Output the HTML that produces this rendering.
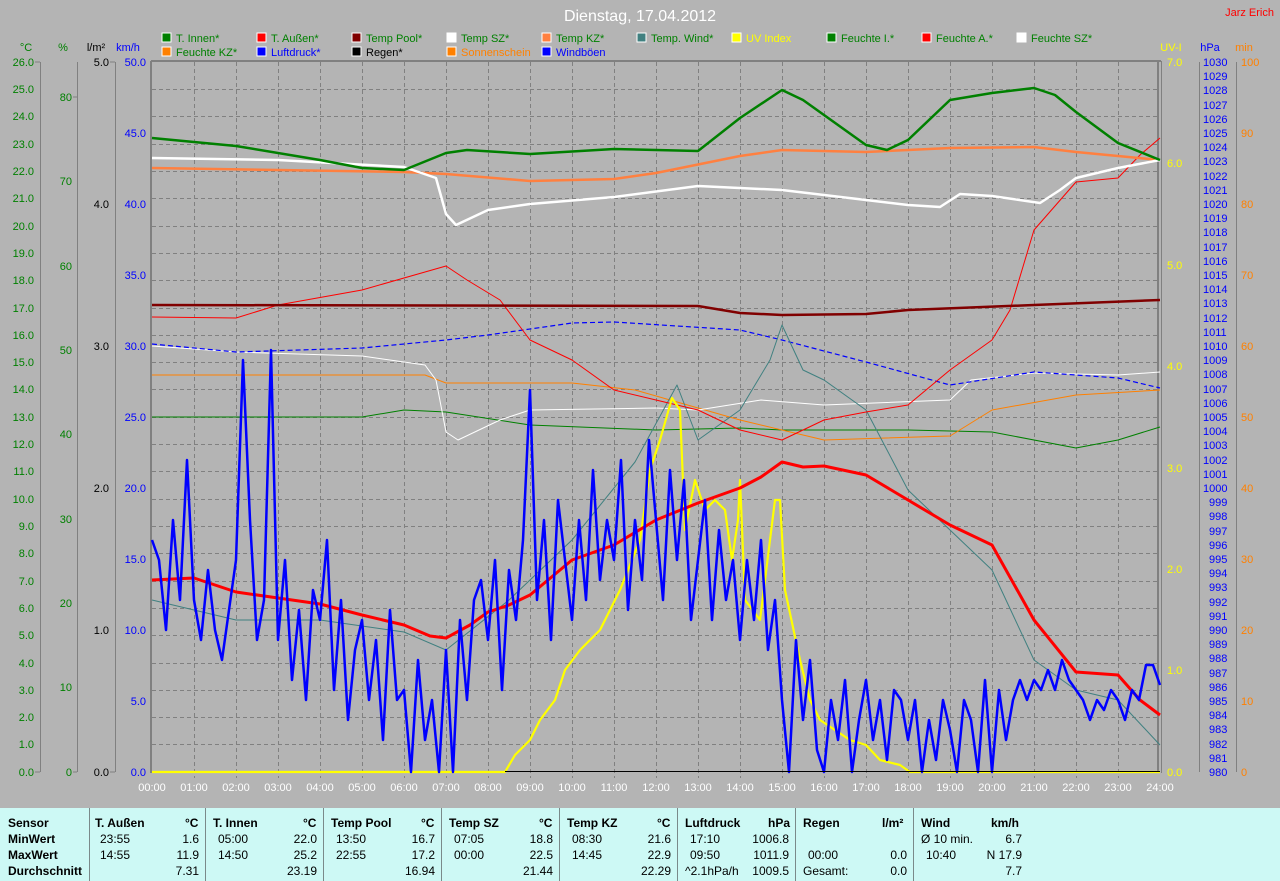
<!DOCTYPE html>
<html><head><meta charset="utf-8"><style>
html,body{margin:0;padding:0;background:#b4b4b4;}
body{width:1280px;height:881px;position:relative;overflow:hidden;font-family:"Liberation Sans",sans-serif;}
svg{position:absolute;left:0;top:0;}
.tb{position:absolute;left:0;top:808px;width:1280px;height:73px;background:#cdf9f5;}
.tb div{position:absolute;font-size:12px;color:#000;white-space:nowrap;}
.b{font-weight:bold;}
.sep{position:absolute;top:0;width:1px;height:73px;background:#7a8a8a;}
</style></head><body>
<svg width="1280" height="881" xmlns="http://www.w3.org/2000/svg" font-family="Liberation Sans, sans-serif">
<text x="640" y="21" fill="#fff" font-size="16" text-anchor="middle">Dienstag, 17.04.2012</text>
<text x="1274" y="16" fill="#f00" font-size="11" text-anchor="end">Jarz Erich</text>
<!-- legend -->
<g font-size="11">
<rect x="162" y="33" width="9" height="9" fill="#008000" stroke="#fff"/><text x="176" y="42" fill="#008000">T. Innen*</text>
<rect x="257" y="33" width="9" height="9" fill="#f00" stroke="#fff"/><text x="271" y="42" fill="#008000">T. Außen*</text>
<rect x="352" y="33" width="9" height="9" fill="#800000" stroke="#fff"/><text x="366" y="42" fill="#008000">Temp Pool*</text>
<rect x="447" y="33" width="9" height="9" fill="#fff" stroke="#fff"/><text x="461" y="42" fill="#008000">Temp SZ*</text>
<rect x="542" y="33" width="9" height="9" fill="#ff8040" stroke="#fff"/><text x="556" y="42" fill="#008000">Temp KZ*</text>
<rect x="637" y="33" width="9" height="9" fill="#408080" stroke="#fff"/><text x="651" y="42" fill="#008000">Temp. Wind*</text>
<rect x="732" y="33" width="9" height="9" fill="#ff0" stroke="#fff"/><text x="746" y="42" fill="#ff0">UV Index</text>
<rect x="827" y="33" width="9" height="9" fill="#008000" stroke="#fff"/><text x="841" y="42" fill="#008000">Feuchte I.*</text>
<rect x="922" y="33" width="9" height="9" fill="#f00" stroke="#fff"/><text x="936" y="42" fill="#008000">Feuchte A.*</text>
<rect x="1017" y="33" width="9" height="9" fill="#fff" stroke="#fff"/><text x="1031" y="42" fill="#008000">Feuchte SZ*</text>
<rect x="162" y="47" width="9" height="9" fill="#ff8000" stroke="#fff"/><text x="176" y="56" fill="#008000">Feuchte KZ*</text>
<rect x="257" y="47" width="9" height="9" fill="#00f" stroke="#fff"/><text x="271" y="56" fill="#00f">Luftdruck*</text>
<rect x="352" y="47" width="9" height="9" fill="#000" stroke="#fff"/><text x="366" y="56" fill="#000">Regen*</text>
<rect x="447" y="47" width="9" height="9" fill="#ff8000" stroke="#fff"/><text x="461" y="56" fill="#ff8000">Sonnenschein</text>
<rect x="542" y="47" width="9" height="9" fill="#00f" stroke="#fff"/><text x="556" y="56" fill="#00f">Windböen</text>
</g>
<!-- left axis headers -->
<g font-size="11">
<text x="26" y="51" fill="#008000" text-anchor="middle">°C</text>
<text x="63" y="51" fill="#008000" text-anchor="middle">%</text>
<text x="96" y="51" fill="#000" text-anchor="middle">l/m²</text>
<text x="128" y="51" fill="#00f" text-anchor="middle">km/h</text>
<text x="1171" y="51" fill="#ff0" text-anchor="middle">UV-I</text>
<text x="1210" y="51" fill="#00f" text-anchor="middle">hPa</text>
<text x="1244" y="51" fill="#ff8000" text-anchor="middle">min</text>
</g>
<g stroke="#808080" stroke-width="1">
<line x1="40.5" y1="62" x2="40.5" y2="772"/>
<line x1="77.5" y1="62" x2="77.5" y2="772"/>
<line x1="115.5" y1="62" x2="115.5" y2="772"/>
<line x1="1199.5" y1="62" x2="1199.5" y2="772"/>
<line x1="1236.5" y1="62" x2="1236.5" y2="772"/>
</g>
<!-- grid -->
<g stroke="#808080" stroke-dasharray="4,3" stroke-width="1">
<line x1="152" y1="89.5" x2="1158" y2="89.5"/><line x1="152" y1="116.5" x2="1158" y2="116.5"/><line x1="152" y1="144.5" x2="1158" y2="144.5"/><line x1="152" y1="171.5" x2="1158" y2="171.5"/><line x1="152" y1="198.5" x2="1158" y2="198.5"/><line x1="152" y1="226.5" x2="1158" y2="226.5"/><line x1="152" y1="253.5" x2="1158" y2="253.5"/><line x1="152" y1="280.5" x2="1158" y2="280.5"/><line x1="152" y1="308.5" x2="1158" y2="308.5"/><line x1="152" y1="335.5" x2="1158" y2="335.5"/><line x1="152" y1="362.5" x2="1158" y2="362.5"/><line x1="152" y1="389.5" x2="1158" y2="389.5"/><line x1="152" y1="417.5" x2="1158" y2="417.5"/><line x1="152" y1="444.5" x2="1158" y2="444.5"/><line x1="152" y1="471.5" x2="1158" y2="471.5"/><line x1="152" y1="499.5" x2="1158" y2="499.5"/><line x1="152" y1="526.5" x2="1158" y2="526.5"/><line x1="152" y1="553.5" x2="1158" y2="553.5"/><line x1="152" y1="581.5" x2="1158" y2="581.5"/><line x1="152" y1="608.5" x2="1158" y2="608.5"/><line x1="152" y1="635.5" x2="1158" y2="635.5"/><line x1="152" y1="663.5" x2="1158" y2="663.5"/><line x1="152" y1="690.5" x2="1158" y2="690.5"/><line x1="152" y1="717.5" x2="1158" y2="717.5"/><line x1="152" y1="744.5" x2="1158" y2="744.5"/>
<line x1="194.5" y1="62" x2="194.5" y2="778"/><line x1="236.5" y1="62" x2="236.5" y2="778"/><line x1="278.5" y1="62" x2="278.5" y2="778"/><line x1="320.5" y1="62" x2="320.5" y2="778"/><line x1="362.5" y1="62" x2="362.5" y2="778"/><line x1="404.5" y1="62" x2="404.5" y2="778"/><line x1="446.5" y1="62" x2="446.5" y2="778"/><line x1="488.5" y1="62" x2="488.5" y2="778"/><line x1="530.5" y1="62" x2="530.5" y2="778"/><line x1="572.5" y1="62" x2="572.5" y2="778"/><line x1="614.5" y1="62" x2="614.5" y2="778"/><line x1="656.5" y1="62" x2="656.5" y2="778"/><line x1="698.5" y1="62" x2="698.5" y2="778"/><line x1="740.5" y1="62" x2="740.5" y2="778"/><line x1="782.5" y1="62" x2="782.5" y2="778"/><line x1="824.5" y1="62" x2="824.5" y2="778"/><line x1="866.5" y1="62" x2="866.5" y2="778"/><line x1="908.5" y1="62" x2="908.5" y2="778"/><line x1="950.5" y1="62" x2="950.5" y2="778"/><line x1="992.5" y1="62" x2="992.5" y2="778"/><line x1="1034.5" y1="62" x2="1034.5" y2="778"/><line x1="1076.5" y1="62" x2="1076.5" y2="778"/><line x1="1118.5" y1="62" x2="1118.5" y2="778"/>
</g>
<g stroke="#808080" stroke-width="2" fill="none">
<line x1="151" y1="61" x2="1161" y2="61"/>
<line x1="151" y1="61" x2="151" y2="773"/>
<line x1="1158" y1="61" x2="1158" y2="773"/>
</g>
<line x1="1161.5" y1="61" x2="1161.5" y2="773" stroke="#808080"/>
<!-- tick labels -->
<g font-size="11" fill="#008000" text-anchor="end">
<text x="34" y="66">26.0</text><text x="34" y="93">25.0</text><text x="34" y="120">24.0</text><text x="34" y="148">23.0</text><text x="34" y="175">22.0</text><text x="34" y="202">21.0</text><text x="34" y="230">20.0</text><text x="34" y="257">19.0</text><text x="34" y="284">18.0</text><text x="34" y="312">17.0</text><text x="34" y="339">16.0</text><text x="34" y="366">15.0</text><text x="34" y="393">14.0</text><text x="34" y="421">13.0</text><text x="34" y="448">12.0</text><text x="34" y="475">11.0</text><text x="34" y="503">10.0</text><text x="34" y="530">9.0</text><text x="34" y="557">8.0</text><text x="34" y="585">7.0</text><text x="34" y="612">6.0</text><text x="34" y="639">5.0</text><text x="34" y="667">4.0</text><text x="34" y="694">3.0</text><text x="34" y="721">2.0</text><text x="34" y="748">1.0</text><text x="34" y="776">0.0</text>
<text x="72" y="101">80</text><text x="72" y="185">70</text><text x="72" y="270">60</text><text x="72" y="354">50</text><text x="72" y="438">40</text><text x="72" y="523">30</text><text x="72" y="607">20</text><text x="72" y="691">10</text><text x="72" y="776">0</text>
</g>
<g font-size="11" fill="#000" text-anchor="end"><text x="109" y="66">5.0</text><text x="109" y="208">4.0</text><text x="109" y="350">3.0</text><text x="109" y="492">2.0</text><text x="109" y="634">1.0</text><text x="109" y="776">0.0</text></g>
<g font-size="11" fill="#00f" text-anchor="end"><text x="146" y="66">50.0</text><text x="146" y="137">45.0</text><text x="146" y="208">40.0</text><text x="146" y="279">35.0</text><text x="146" y="350">30.0</text><text x="146" y="421">25.0</text><text x="146" y="492">20.0</text><text x="146" y="563">15.0</text><text x="146" y="634">10.0</text><text x="146" y="705">5.0</text><text x="146" y="776">0.0</text></g>
<g stroke="#808080"><line x1="35" y1="62" x2="40" y2="62"/><line x1="35" y1="772" x2="40" y2="772"/><line x1="73" y1="97" x2="77" y2="97"/><line x1="73" y1="772" x2="77" y2="772"/><line x1="110" y1="62" x2="115" y2="62"/><line x1="110" y1="772" x2="115" y2="772"/></g>
<g font-size="11" fill="#ff0"><text x="1167" y="66">7.0</text><text x="1167" y="167">6.0</text><text x="1167" y="269">5.0</text><text x="1167" y="370">4.0</text><text x="1167" y="472">3.0</text><text x="1167" y="573">2.0</text><text x="1167" y="674">1.0</text><text x="1167" y="776">0.0</text></g>
<g font-size="11" fill="#00f">
<text x="1203" y="66">1030</text><text x="1203" y="80">1029</text><text x="1203" y="94">1028</text><text x="1203" y="109">1027</text><text x="1203" y="123">1026</text><text x="1203" y="137">1025</text><text x="1203" y="151">1024</text><text x="1203" y="165">1023</text><text x="1203" y="180">1022</text><text x="1203" y="194">1021</text><text x="1203" y="208">1020</text><text x="1203" y="222">1019</text><text x="1203" y="236">1018</text><text x="1203" y="251">1017</text><text x="1203" y="265">1016</text><text x="1203" y="279">1015</text><text x="1203" y="293">1014</text><text x="1203" y="307">1013</text><text x="1203" y="322">1012</text><text x="1203" y="336">1011</text><text x="1203" y="350">1010</text><text x="1203" y="364">1009</text><text x="1203" y="378">1008</text><text x="1203" y="393">1007</text><text x="1203" y="407">1006</text><text x="1203" y="421">1005</text><text x="1203" y="435">1004</text><text x="1203" y="449">1003</text><text x="1203" y="464">1002</text><text x="1203" y="478">1001</text><text x="1203" y="492">1000</text><text x="1209" y="506">999</text><text x="1209" y="520">998</text><text x="1209" y="535">997</text><text x="1209" y="549">996</text><text x="1209" y="563">995</text><text x="1209" y="577">994</text><text x="1209" y="591">993</text><text x="1209" y="606">992</text><text x="1209" y="620">991</text><text x="1209" y="634">990</text><text x="1209" y="648">989</text><text x="1209" y="662">988</text><text x="1209" y="677">987</text><text x="1209" y="691">986</text><text x="1209" y="705">985</text><text x="1209" y="719">984</text><text x="1209" y="733">983</text><text x="1209" y="748">982</text><text x="1209" y="762">981</text><text x="1209" y="776">980</text>
</g>
<g font-size="11" fill="#ff8000"><text x="1241" y="66">100</text><text x="1241" y="137">90</text><text x="1241" y="208">80</text><text x="1241" y="279">70</text><text x="1241" y="350">60</text><text x="1241" y="421">50</text><text x="1241" y="492">40</text><text x="1241" y="563">30</text><text x="1241" y="634">20</text><text x="1241" y="705">10</text><text x="1241" y="776">0</text></g>
<g font-size="11" fill="#fff" text-anchor="middle">
<text x="152" y="791">00:00</text><text x="194" y="791">01:00</text><text x="236" y="791">02:00</text><text x="278" y="791">03:00</text><text x="320" y="791">04:00</text><text x="362" y="791">05:00</text><text x="404" y="791">06:00</text><text x="446" y="791">07:00</text><text x="488" y="791">08:00</text><text x="530" y="791">09:00</text><text x="572" y="791">10:00</text><text x="614" y="791">11:00</text><text x="656" y="791">12:00</text><text x="698" y="791">13:00</text><text x="740" y="791">14:00</text><text x="782" y="791">15:00</text><text x="824" y="791">16:00</text><text x="866" y="791">17:00</text><text x="908" y="791">18:00</text><text x="950" y="791">19:00</text><text x="992" y="791">20:00</text><text x="1034" y="791">21:00</text><text x="1076" y="791">22:00</text><text x="1118" y="791">23:00</text><text x="1160" y="791">24:00</text>
</g>
<!-- curves -->
<g fill="none" stroke-linejoin="round">
<polyline stroke="#008000" stroke-width="1" points="152,417 362,417 404,410 446,412 530,425 656,430 740,428 782,430 908,430 992,432 1076,448 1118,440 1160,427"/>
<polyline stroke="#ff8000" stroke-width="1" points="152,375 425,375 446,383 572,383 635,390 740,420 824,440 950,436 992,410 1076,395 1160,390"/>
<polyline stroke="#ffffff" stroke-width="1" points="152,346 236,352 362,356 425,365 436,380 446,432 458,440 500,420 530,410 656,408 698,410 761,400 824,405 950,400 971,380 1034,373 1118,375 1160,372"/>
<polyline stroke="#0000ff" stroke-width="1.2" stroke-dasharray="5,3" points="152,344 236,352 362,348 446,340 488,335 572,323 614,322 740,330 782,340 866,362 950,385 1034,372 1118,378 1160,388"/>
<polyline stroke="#408080" stroke-width="1" points="152,600 236,620 320,620 404,632 446,650 509,600 572,540 635,462 677,385 698,440 740,410 770,360 782,325 803,370 824,380 866,410 908,490 950,530 992,570 1034,660 1076,690 1118,700 1160,745"/>
<polyline stroke="#ff0000" stroke-width="1" points="152,317 236,318 278,305 362,290 425,272 446,266 467,280 500,300 530,340 572,360 614,390 656,400 698,410 740,430 782,440 824,420 866,412 908,405 950,370 992,340 1010,310 1034,230 1076,182 1118,178 1140,155 1160,138"/>
<polyline stroke="#800000" stroke-width="2.5" points="152,305 698,306 740,313 782,315 866,314 908,310 1034,305 1160,300"/>
<polyline stroke="#ff8040" stroke-width="2.5" points="152,168 404,172 446,174 530,181 614,179 656,173 740,156 782,150 866,152 908,150 950,148 1034,147 1076,152 1118,156 1160,160"/>
<polyline stroke="#ffffff" stroke-width="2.5" points="152,158 278,160 404,167 436,178 446,214 456,225 488,210 530,204 614,197 698,186 782,190 866,200 908,205 940,207 960,194 992,196 1040,203 1060,190 1076,178 1118,168 1160,160"/>
<polyline stroke="#008000" stroke-width="2.5" points="152,138 236,146 320,160 362,168 404,170 446,153 467,150 530,154 614,149 698,151 740,118 782,90 803,100 824,115 866,145 887,150 908,140 950,100 992,93 1034,88 1055,95 1076,112 1118,143 1160,160"/>
<polyline stroke="#ffff00" stroke-width="2.2" points="152,772 505,772 515,755 530,740 540,720 555,700 565,670 580,650 600,630 620,590 640,540 650,470 660,440 672,398 680,410 685,530 695,480 705,510 715,500 725,510 732,560 738,520 740,480 745,600 760,620 775,500 780,500 785,590 800,660 810,700 820,720 835,730 850,740 866,745 880,760 900,765 910,772 1160,772"/>
<polyline stroke="#ff0000" stroke-width="3" points="152,580 194,578 236,592 278,598 320,604 362,615 404,625 430,636 446,638 470,625 488,612 509,605 530,595 572,560 614,545 656,520 698,503 740,488 761,477 782,462 803,467 824,466 866,475 908,500 950,525 992,545 1034,620 1076,672 1118,675 1140,700 1160,715"/>
<polyline stroke="#0000ff" stroke-width="2.5" points="152,540 159,560 166,630 173,520 180,600 187,460 194,600 201,640 208,570 215,630 222,660 229,610 236,560 243,360 250,520 257,640 264,600 271,350 278,640 285,560 292,680 299,610 306,700 313,590 320,620 327,540 334,690 341,600 348,720 355,650 362,620 369,700 376,640 383,740 390,610 397,700 404,690 411,772 418,660 425,740 432,700 439,772 446,650 453,772 460,620 467,700 474,600 481,580 488,640 495,560 502,690 509,570 516,620 523,540 530,390 537,600 544,520 551,640 558,500 565,560 572,620 579,520 586,600 593,470 600,580 607,520 614,560 621,460 628,610 635,520 642,580 649,440 656,520 663,600 670,470 677,560 684,480 691,620 698,560 705,500 712,620 719,530 726,600 733,560 740,640 747,560 754,620 761,540 768,650 775,600 782,700 789,772 796,640 803,720 810,660 817,750 824,772 831,700 838,740 845,680 852,772 859,720 866,680 873,740 880,700 887,760 894,690 901,700 908,740 915,700 922,772 929,720 936,760 943,700 950,730 957,772 964,700 971,720 978,772 985,680 992,772 999,690 1006,740 1013,700 1020,680 1027,700 1034,680 1041,690 1048,670 1055,690 1062,660 1069,680 1076,690 1083,700 1090,720 1097,700 1104,710 1111,690 1118,700 1125,720 1132,690 1139,700 1146,665 1153,665 1160,685"/>
</g>
<line x1="505" y1="771.5" x2="1160" y2="771.5" stroke="#000"/>
</svg>
<div class="tb">
<div class="sep" style="left:89px"></div><div class="sep" style="left:205px"></div><div class="sep" style="left:323px"></div><div class="sep" style="left:441px"></div><div class="sep" style="left:559px"></div><div class="sep" style="left:677px"></div><div class="sep" style="left:795px"></div><div class="sep" style="left:913px"></div>
<div class="b" style="left:8px;top:8px">Sensor</div><div class="b" style="left:8px;top:24px">MinWert</div><div class="b" style="left:8px;top:40px">MaxWert</div><div class="b" style="left:8px;top:56px">Durchschnitt</div>
<div class="b" style="left:95px;top:8px">T. Außen</div><div class="b" style="left:185px;top:8px">°C</div>
<div style="left:100px;top:24px">23:55</div><div style="left:100px;top:40px">14:55</div><div style="right:1081px;top:24px">1.6</div><div style="right:1081px;top:40px">11.9</div><div style="right:1081px;top:56px">7.31</div>
<div class="b" style="left:213px;top:8px">T. Innen</div><div class="b" style="left:303px;top:8px">°C</div>
<div style="left:218px;top:24px">05:00</div><div style="left:218px;top:40px">14:50</div><div style="right:963px;top:24px">22.0</div><div style="right:963px;top:40px">25.2</div><div style="right:963px;top:56px">23.19</div>
<div class="b" style="left:331px;top:8px">Temp Pool</div><div class="b" style="left:421px;top:8px">°C</div>
<div style="left:336px;top:24px">13:50</div><div style="left:336px;top:40px">22:55</div><div style="right:845px;top:24px">16.7</div><div style="right:845px;top:40px">17.2</div><div style="right:845px;top:56px">16.94</div>
<div class="b" style="left:449px;top:8px">Temp SZ</div><div class="b" style="left:539px;top:8px">°C</div>
<div style="left:454px;top:24px">07:05</div><div style="left:454px;top:40px">00:00</div><div style="right:727px;top:24px">18.8</div><div style="right:727px;top:40px">22.5</div><div style="right:727px;top:56px">21.44</div>
<div class="b" style="left:567px;top:8px">Temp KZ</div><div class="b" style="left:657px;top:8px">°C</div>
<div style="left:572px;top:24px">08:30</div><div style="left:572px;top:40px">14:45</div><div style="right:609px;top:24px">21.6</div><div style="right:609px;top:40px">22.9</div><div style="right:609px;top:56px">22.29</div>
<div class="b" style="left:685px;top:8px">Luftdruck</div><div class="b" style="left:768px;top:8px">hPa</div>
<div style="left:690px;top:24px">17:10</div><div style="left:690px;top:40px">09:50</div><div style="left:685px;top:56px">^2.1hPa/h</div><div style="right:491px;top:24px">1006.8</div><div style="right:491px;top:40px">1011.9</div><div style="right:491px;top:56px">1009.5</div>
<div class="b" style="left:803px;top:8px">Regen</div><div class="b" style="left:882px;top:8px">l/m²</div>
<div style="left:808px;top:40px">00:00</div><div style="left:803px;top:56px">Gesamt:</div><div style="right:373px;top:40px">0.0</div><div style="right:373px;top:56px">0.0</div>
<div class="b" style="left:921px;top:8px">Wind</div><div class="b" style="left:991px;top:8px">km/h</div>
<div style="left:921px;top:24px">Ø 10 min.</div><div style="left:926px;top:40px">10:40</div><div style="right:258px;top:24px">6.7</div><div style="right:258px;top:40px">N 17.9</div><div style="right:258px;top:56px">7.7</div>
</div>
</body></html>
